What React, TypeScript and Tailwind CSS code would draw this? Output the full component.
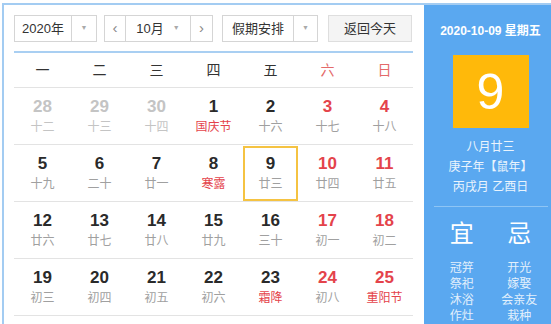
import React from "react";

type Day = { n: number; l: string; dim?: boolean; redNum?: boolean; redLunar?: boolean; today?: boolean };

const weeks: Day[][] = [
  [
    { n: 28, l: "十二", dim: true },
    { n: 29, l: "十三", dim: true },
    { n: 30, l: "十四", dim: true },
    { n: 1, l: "国庆节", redLunar: true },
    { n: 2, l: "十六" },
    { n: 3, l: "十七", redNum: true },
    { n: 4, l: "十八", redNum: true },
  ],
  [
    { n: 5, l: "十九" },
    { n: 6, l: "二十" },
    { n: 7, l: "廿一" },
    { n: 8, l: "寒露", redLunar: true },
    { n: 9, l: "廿三", today: true },
    { n: 10, l: "廿四", redNum: true },
    { n: 11, l: "廿五", redNum: true },
  ],
  [
    { n: 12, l: "廿六" },
    { n: 13, l: "廿七" },
    { n: 14, l: "廿八" },
    { n: 15, l: "廿九" },
    { n: 16, l: "三十" },
    { n: 17, l: "初一", redNum: true },
    { n: 18, l: "初二", redNum: true },
  ],
  [
    { n: 19, l: "初三" },
    { n: 20, l: "初四" },
    { n: 21, l: "初五" },
    { n: 22, l: "初六" },
    { n: 23, l: "霜降", redLunar: true },
    { n: 24, l: "初八", redNum: true },
    { n: 25, l: "重阳节", redNum: true, redLunar: true },
  ],
];

const weekdays = ["一", "二", "三", "四", "五", "六", "日"];

const Caret = () => <span className="text-[7px] text-[#aaa]">▼</span>;

const App = () => {
  return (
    <div
      className="w-[551px] h-[324px] overflow-hidden bg-white pt-[3px] pl-[2px]"
      style={{ fontFamily: '"Liberation Sans", "Noto Sans CJK SC", sans-serif' }}
    >
      <div className="flex h-full border-l-2 border-t-2 border-[#a3ccf2]">
        {/* calendar */}
        <div className="w-[420px] shrink-0 pl-[10px] pr-[11px] pt-[10px]">
          <div className="flex h-[27px] text-[13px] text-[#333]">
            <div className="flex w-[83px] border border-[#d5d5d5]">
              <span className="flex w-[57px] items-center justify-center border-r border-[#d5d5d5]">2020年</span>
              <span className="flex flex-1 items-center justify-center">
                <Caret />
              </span>
            </div>
            <div className="ml-[7px] flex w-[109px] border border-[#d5d5d5]">
              <span className="flex w-[21px] items-center justify-center border-r border-[#d5d5d5] text-[15px] text-[#888]">‹</span>
              <span className="flex flex-1 items-center justify-center gap-[9px]">
                10月 <Caret />
              </span>
              <span className="flex w-[22px] items-center justify-center border-l border-[#d5d5d5] text-[15px] text-[#888]">›</span>
            </div>
            <div className="ml-[9px] flex w-[96px] border border-[#d5d5d5]">
              <span className="flex w-[71px] items-center justify-center border-r border-[#d5d5d5]">假期安排</span>
              <span className="flex flex-1 items-center justify-center">
                <Caret />
              </span>
            </div>
            <div className="ml-[10px] flex w-[84px] items-center justify-center border border-[#dedede] bg-[#f4f4f4]">
              返回今天
            </div>
          </div>

          <div className="mt-[9px] h-[2px] bg-[#a9cff2]" />

          <div className="grid h-[35px] grid-cols-7 border-b border-[#e3e3e3] text-[14px]">
            {weekdays.map((w, i) => (
              <div key={w} className={`flex items-center justify-center ${i >= 5 ? "text-[#e46a6a]" : "text-[#333]"}`}>
                {w}
              </div>
            ))}
          </div>

          {weeks.map((week, wi) => (
            <div key={wi} className="grid h-[57px] grid-cols-7 border-b border-[#e3e3e3]">
              {week.map((d, di) => (
                <div key={di} className="flex items-center justify-center">
                  <div
                    className={`flex h-[55px] w-[55px] flex-col items-center justify-center ${
                      d.today ? "border-2 border-[#f5c342]" : ""
                    }`}
                  >
                    <span
                      className={`text-[17px] font-bold leading-[22px] ${
                        d.dim ? "text-[#c4c4c4]" : d.redNum ? "text-[#e4434b]" : "text-[#2a2a2a]"
                      }`}
                    >
                      {d.n}
                    </span>
                    <span
                      className={`text-[12px] leading-[18px] ${
                        d.redLunar ? "text-[#e4434b]" : d.dim ? "text-[#c4c4c4]" : "text-[#a0a0a0]"
                      }`}
                    >
                      {d.l}
                    </span>
                  </div>
                </div>
              ))}
            </div>
          ))}
        </div>

        {/* detail panel */}
        <div className="flex w-[133px] shrink-0 flex-col items-center bg-[#5aa8f0] pt-[18px] text-white">
          <div className="text-[12px] font-semibold leading-[16px]">2020-10-09 星期五</div>
          <div className="mt-[16px] flex h-[77px] w-[76px] items-center justify-center bg-[#ffb90a] text-[50px] leading-none">
            9
          </div>
          <div className="mt-[9px] flex flex-col items-center text-[12px] leading-[20px] text-[#eaf4fd]">
            <span>八月廿三</span>
            <span>庚子年【鼠年】</span>
            <span>丙戌月 乙酉日</span>
          </div>
          <div className="mt-[9px] h-px w-[114px] bg-[#8ec5f5]" />
          <div className="mt-[12px] grid w-full grid-cols-2 px-[9px]">
            {[
              { t: "宜", items: ["冠笄", "祭祀", "沐浴", "作灶"] },
              { t: "忌", items: ["开光", "嫁娶", "会亲友", "栽种"] },
            ].map((c) => (
              <div key={c.t} className="flex flex-col items-center">
                <span className="text-[24px] leading-[30px]">{c.t}</span>
                <div className="mt-[11px] flex flex-col items-center text-[12px] leading-[16px] text-[#e3f0fc]">
                  {c.items.map((it) => (
                    <span key={it}>{it}</span>
                  ))}
                </div>
              </div>
            ))}
          </div>
        </div>
      </div>
    </div>
  );
};

export default App;
